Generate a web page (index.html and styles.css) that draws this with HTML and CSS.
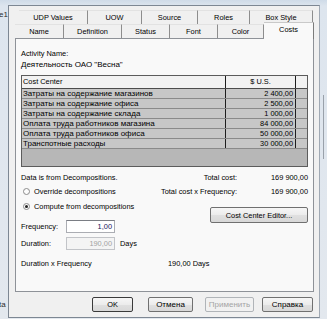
FILE: index.html
```html
<!DOCTYPE html>
<html lang="ru">
<head>
	<meta charset="UTF-8">
	<title>Costs</title>
	<link rel="stylesheet" href="styles.css">
</head>
<body>
<div id="screen">
	<div class="glass-left">
		<span class="under">e1</span>
		<span class="under">ta</span>
	</div>

	<div id="dialog">
		<div id="tabs">
			<div class="tabrow back">
				<span class="tab t-udp">UDP Values</span>
				<span class="tab t-uow">UOW</span>
				<span class="tab t-source">Source</span>
				<span class="tab t-roles">Roles</span>
				<span class="tab t-box">Box Style</span>
			</div>
			<div class="tabrow front">
				<span class="tab t-name">Name</span>
				<span class="tab t-def">Definition</span>
				<span class="tab t-status">Status</span>
				<span class="tab t-font">Font</span>
				<span class="tab t-color">Color</span>
				<span class="tab t-costs cur">Costs</span>
			</div>
		</div>

		<div id="panel">
			<div class="line name-label">Activity Name:</div>
			<div class="line ru">Деятельность ОАО "Весна"</div>

			<div id="grid">
				<div class="row head">
					<span class="c1">Cost Center</span>
					<span class="c2 mid">$ U.S.</span>
					<span class="c3"></span>
				</div>
				<div class="row first">
					<span class="c1 ru">Затраты на содержание магазинов</span>
					<span class="c2">2 400,00</span>
					<span class="c3"></span>
				</div>
				<div class="row">
					<span class="c1 ru">Затраты на содержание офиса</span>
					<span class="c2">2 500,00</span>
					<span class="c3"></span>
				</div>
				<div class="row">
					<span class="c1 ru">Затраты на содержание склада</span>
					<span class="c2">1 000,00</span>
					<span class="c3"></span>
				</div>
				<div class="row">
					<span class="c1 ru">Оплата труда работников магазина</span>
					<span class="c2">84 000,00</span>
					<span class="c3"></span>
				</div>
				<div class="row">
					<span class="c1 ru">Оплата труда работников офиса</span>
					<span class="c2">50 000,00</span>
					<span class="c3"></span>
				</div>
				<div class="row">
					<span class="c1 ru">Транспотные расходы</span>
					<span class="c2">30 000,00</span>
					<span class="c3"></span>
				</div>
			</div>

			<div id="bottom">
				<div class="left">
					<div class="line">Data is from Decompositions.</div>
					<div class="line radio-line r1"><i class="radio"></i>Override decompositions</div>
					<div class="line radio-line r2"><i class="radio on"></i>Compute from decompositions</div>
					<div class="field f1">
						<span class="flabel">Frequency:</span>
						<span class="input">1,00</span>
					</div>
					<div class="field f2">
						<span class="flabel">Duration:</span>
						<span class="input off">190,00</span>
						<span class="days">Days</span>
					</div>
				</div>
				<div class="right">
					<div class="line total"><span class="lbl">Total cost:</span><span class="val">169 900,00</span></div>
					<div class="line total t2"><span class="lbl">Total cost x Frequency:</span><span class="val">169 900,00</span></div>
					<button class="btn editor">Cost Center Editor...</button>
				</div>
			</div>

			<div class="line dxf"><span class="dxf-label">Duration x Frequency</span>190,00 Days</div>
		</div>

		<div id="buttons">
			<button class="btn ok">OK</button>
			<button class="btn cancel ru">Отмена</button>
			<button class="btn apply ru" disabled>Применить</button>
			<button class="btn help ru">Справка</button>
		</div>
	</div>

	<div class="glass-right"><span class="shade"></span></div>
</div>
</body>
</html>
```

FILE: styles.css
```css
*{
	box-sizing: border-box;
}
body{
	margin: 0;
	width: 327px;
	height: 319px;
	overflow: hidden;
	background: linear-gradient(#cfdbe8, #dde5ee 6px, #e3e8ee);
	font-family: "Liberation Sans", Arial, sans-serif;
	font-size: 7.4px;
	color: #000;
}
.ru{
	font-size: 8px;
}
#screen{
	display: flex;
	height: 319px;
}

/* glass frame */
.glass-left{
	width: 8px;
	overflow: hidden;
	display: flex;
	flex-direction: column;
	justify-content: space-between;
	padding: 10px 0 10px;
}
.under{
	display: block;
	white-space: nowrap;
	margin-left: -1px;
	font-size: 8px;
	line-height: 9px;
	color: #2c2c2c;
}
.glass-right{
	width: 7px;
	display: flex;
	justify-content: center;
	padding-top: 95px;
}
.shade{
	display: block;
	width: 1px;
	height: 64px;
	background: #9aa1aa;
}

/* dialog */
#dialog{
	width: 312px;
	height: 313px;
	margin-top: 5px;
	border: 1px solid #7d8793;
	border-right-color: #a0a9b4;
	background: #f0f0f0;
	display: flex;
	flex-direction: column;
}

/* tabs */
#tabs{
	margin: 4px 5px 0 6px;
}
.tabrow{
	display: flex;
	height: 14px;
}
.back{
	padding-left: 4px;
}
.front{
	align-items: flex-end;
}
.tab{
	display: flex;
	align-items: center;
	justify-content: center;
	height: 14px;
	border-right: 1px solid #8d8d8d;
	border-top: 1px solid #e2e2e2;
	white-space: nowrap;
}
.t-udp{ width: 69px; }
.t-uow{ width: 54px; }
.t-source{ width: 56px; }
.t-roles{ width: 52px; }
.t-box{ width: 63px; }
.t-name{ width: 49px; }
.t-def{ width: 58px; }
.t-status{ width: 48px; }
.t-font{ width: 48px; }
.t-color{ width: 46px; }
.t-costs{ width: 50px; }
.cur{
	position: relative;
	z-index: 1;
	height: 17px;
	margin-bottom: -1px;
	padding-bottom: 3px;
	background: #f9f9f9;
	border-top-color: #c9c9c9;
	border-right-color: #7c7c7c;
}

/* panel */
#panel{
	height: 254px;
	margin: 0 5px 0 6px;
	padding: 0 5px;
	border: 1px solid #8e9298;
	background: #f9f9f9;
}
.line{
	height: 11px;
	line-height: 11px;
	white-space: nowrap;
}
.name-label{
	margin-top: 9px;
}

/* cost grid */
#grid{
	margin-top: 5px;
	height: 92px;
	border: 1px solid #5c5c5c;
	background: #b7b7b7;
}
.row{
	display: flex;
	height: 10px;
	line-height: 9px;
	border-bottom: 1px solid #8a8a8a;
	background: #c7c7c7;
	white-space: nowrap;
}
.row.head{
	height: 13px;
	line-height: 12px;
	background: #f2f2f2;
	border-bottom-color: #4c4c4c;
}
.c1{
	width: 204px;
	padding-left: 1px;
	border-right: 1px solid #1e1e1e;
	overflow: hidden;
}
.c2{
	width: 70px;
	padding-right: 2px;
	text-align: right;
	border-right: 1px solid #1e1e1e;
}
.c2.mid{
	text-align: center;
	padding-right: 0;
}
.c3{
	flex: 1;
}

/* lower part */
#bottom{
	display: flex;
	margin-top: 5px;
}
.left{
	width: 129px;
}
.right{
	flex: 1;
}
.radio-line{
	display: flex;
	align-items: center;
}
.r1{
	margin-top: 3px;
}
.r2{
	margin-top: 4px;
}
.radio{
	display: flex;
	align-items: center;
	justify-content: center;
	width: 7px;
	height: 7px;
	margin: 0 4px 0 2px;
	border: 1px solid #8b8b8b;
	border-radius: 50%;
	background: #fdfdfd;
}
.radio.on::after{
	content: "";
	width: 3px;
	height: 3px;
	border-radius: 50%;
	background: #222;
}
.field{
	display: flex;
	align-items: center;
	height: 13px;
}
.f1{
	margin-top: 8px;
}
.f2{
	margin-top: 4px;
}
.flabel{
	width: 45px;
}
.input{
	width: 49px;
	height: 13px;
	line-height: 11px;
	padding-right: 2px;
	text-align: right;
	border: 1px solid #abadb3;
	border-top-color: #7a7d84;
	background: #fff;
	color: #15155a;
}
.input.off{
	border-color: #c2c4c8;
	background: #f4f4f4;
	color: #a2a2a2;
}
.days{
	margin-left: 5px;
}
.total{
	display: flex;
}
.total .lbl{
	flex: 1;
	text-align: right;
}
.total .val{
	width: 71px;
	text-align: right;
}
.t2{
	margin-top: 3px;
}
.dxf{
	margin-top: 8px;
}
.dxf-label{
	display: inline-block;
	width: 147px;
}

/* buttons */
.btn{
	height: 15px;
	padding: 0;
	border: 1px solid #707070;
	border-radius: 2px;
	background: linear-gradient(#f6f6f6, #ececec 50%, #e0e0e0 51%, #d8d8d8);
	font: inherit;
	color: #000;
}
.editor{
	display: block;
	width: 98px;
	height: 16px;
	margin: 10px 0 0 auto;
	font-size: 7.4px;
}
#buttons{
	display: flex;
	justify-content: flex-end;
	margin-top: 5px;
	padding-right: 6px;
}
.ok{
	width: 41px;
	margin-right: 15px;
	border-color: #3a3a3a;
	font-size: 7.4px;
}
.cancel{
	width: 45px;
	margin-right: 12px;
}
.apply{
	width: 49px;
	margin-right: 8px;
	border-color: #b0b4b8;
	background: #f1f1f1;
	color: #a4a4a4;
}
.help{
	width: 51px;
}
.btn.ru{
	font-size: 8px;
}
```
